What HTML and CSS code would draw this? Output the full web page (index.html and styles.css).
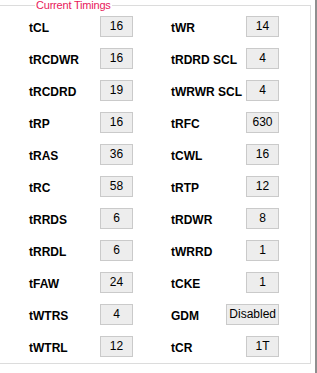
FILE: index.html
```html
<!DOCTYPE html>
<html lang="en">
<head>
  <meta charset="UTF-8" />
  <title>Current Timings</title>
  <link rel="stylesheet" href="styles.css">
</head>
<body>
  <fieldset class="timings">
    <legend>Current Timings</legend>
    <div class="grid">
      <span class="name">tCL</span><span class="val">16</span>
      <span class="name">tWR</span><span class="val">14</span>

      <span class="name">tRCDWR</span><span class="val">16</span>
      <span class="name">tRDRD SCL</span><span class="val">4</span>

      <span class="name">tRCDRD</span><span class="val">19</span>
      <span class="name">tWRWR SCL</span><span class="val">4</span>

      <span class="name">tRP</span><span class="val">16</span>
      <span class="name">tRFC</span><span class="val">630</span>

      <span class="name">tRAS</span><span class="val">36</span>
      <span class="name">tCWL</span><span class="val">16</span>

      <span class="name">tRC</span><span class="val">58</span>
      <span class="name">tRTP</span><span class="val">12</span>

      <span class="name">tRRDS</span><span class="val">6</span>
      <span class="name">tRDWR</span><span class="val">8</span>

      <span class="name">tRRDL</span><span class="val">6</span>
      <span class="name">tWRRD</span><span class="val">1</span>

      <span class="name">tFAW</span><span class="val">24</span>
      <span class="name">tCKE</span><span class="val">1</span>

      <span class="name">tWTRS</span><span class="val">4</span>
      <span class="name">GDM</span><span class="val wide">Disabled</span>

      <span class="name">tWTRL</span><span class="val">12</span>
      <span class="name">tCR</span><span class="val">1T</span>
    </div>
  </fieldset>
</body>
</html>
```

FILE: styles.css
```css
html, body {
  margin: 0;
  background: #ffffff;
}
body {
  height: 373px;
  border-right: 2px solid #8f8f8f;
  font-family: "Liberation Sans", Arial, sans-serif;
  color: #000000;
  overflow: hidden;
}
.timings {
  margin: 0 0 0 -1px;
  width: 312px;
  height: 364px;
  box-sizing: border-box;
  border: 1px solid #dcdcdc;
  padding: 5px 31px 0 29px;
}
.timings legend {
  font-size: 11px;
  line-height: 11px;
  letter-spacing: -0.2px;
  color: #e8185a;
  padding: 0 1px;
  margin-left: 6px;
}
.grid {
  display: grid;
  grid-template-columns: 71px 71px 1fr auto;
  grid-auto-rows: 21px;
  row-gap: 11px;
  align-items: center;
}
.name {
  font-weight: bold;
  font-size: 12px;
  padding-top: 3px;
  white-space: nowrap;
}
.val {
  height: 21px;
  box-sizing: border-box;
  min-width: 33px;
  padding: 0 3px;
  background: #ededed;
  border: 1px solid #cacaca;
  font-size: 12px;
  line-height: 19px;
  text-align: center;
}
.grid .val:nth-child(2n) {
  justify-self: start;
}
.grid .val:nth-child(4n) {
  justify-self: end;
}
.val.wide {
  padding: 0 2px;
}
```
